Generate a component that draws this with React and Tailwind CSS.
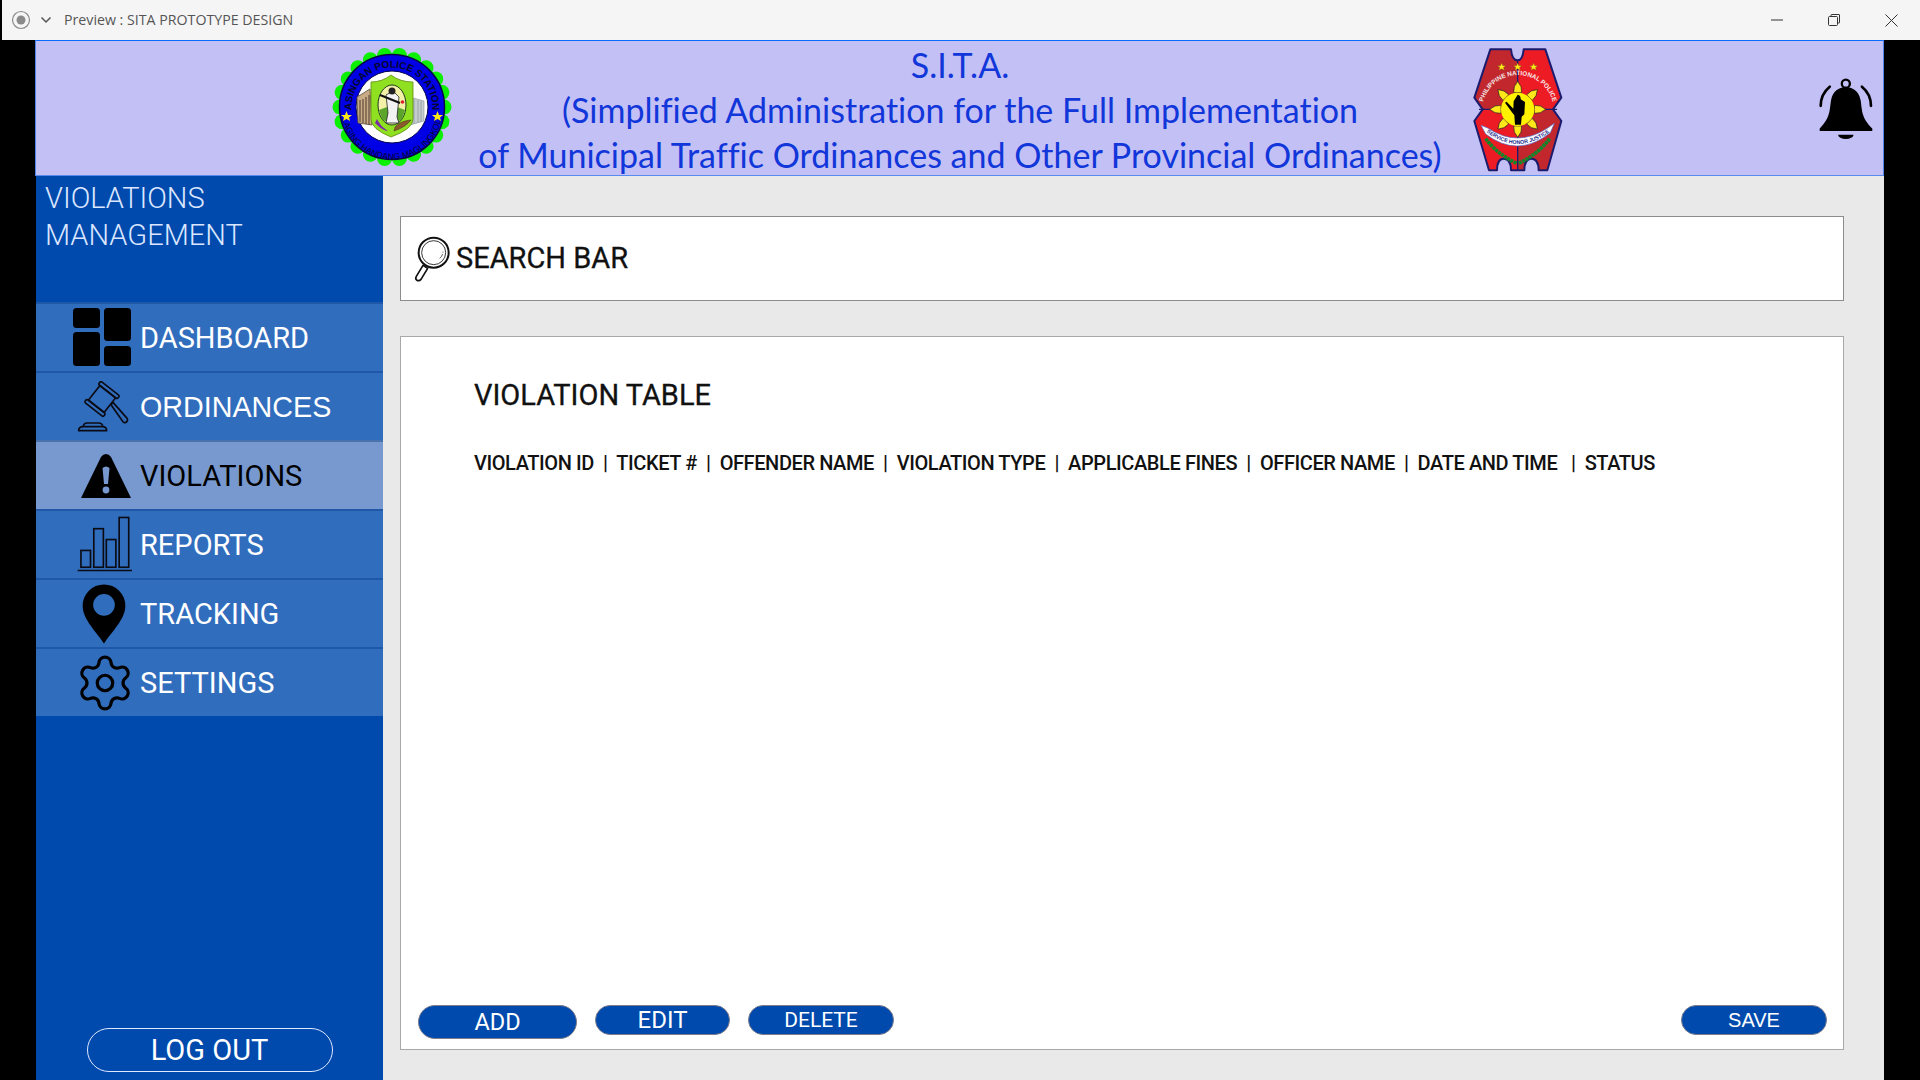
import React from "react";
import { Settings } from "lucide-react";

const roboto = "font-['Roboto',sans-serif]";

const DashboardIcon = () => (
  <svg width="58" height="59" viewBox="0 0 58 59" className="shrink-0">
    <rect x="0" y="0" width="27" height="20" rx="3.5" fill="#000" />
    <rect x="0" y="24" width="27" height="34" rx="3.5" fill="#000" />
    <rect x="31" y="0" width="27" height="33" rx="3.5" fill="#000" />
    <rect x="31" y="38" width="27" height="20" rx="3.5" fill="#000" />
  </svg>
);

const GavelIcon = () => (
  <svg width="56" height="52" viewBox="135 268 168 156" className="shrink-0">
    <g fill="none" stroke="#0b0b14" strokeWidth="5" strokeLinejoin="round">
      <g transform="rotate(38 216 322)">
        <rect x="186" y="294" width="60" height="56" />
        <rect x="180" y="282" width="72" height="12" rx="5" />
        <rect x="180" y="350" width="72" height="12" rx="5" />
      </g>
      <path d="M243 339 L249 332 L292 381 Q294 388 288 392 Q283 395 279 390 Z" />
      <path d="M146 417 Q146 405 160 405 L217 405 Q230 405 230 417 Z" />
      <path d="M160 405 Q160 394 172 394 L206 394 Q218 394 218 405" />
    </g>
  </svg>
);

const WarningIcon = ({ fill }) => (
  <svg width="50" height="44" viewBox="0 0 50 44" className="shrink-0">
    <path d="M25 0 Q28 0 30 3 L50 44 L0 44 L20 3 Q22 0 25 0 Z" fill="#000" />
    <path d="M21.5 14 Q25 11 28.5 14 L27 30 L23 30 Z" fill={fill} />
    <circle cx="25" cy="36" r="3.4" fill={fill} />
  </svg>
);

const ReportsIcon = () => (
  <svg width="56" height="57" viewBox="140 48 170 170" className="shrink-0">
    <g fill="none" stroke="#0b0b14" strokeWidth="5">
      <rect x="152" y="151" width="29" height="51" />
      <rect x="191" y="85" width="29" height="117" />
      <rect x="229" y="118" width="29" height="84" />
      <rect x="268" y="51" width="29" height="151" />
    </g>
    <path d="M142 212 H307" stroke="#0b0b14" strokeWidth="5" />
  </svg>
);

const PinIcon = () => (
  <svg width="44" height="60" viewBox="156 249 134 182" className="shrink-0">
    <path
      fillRule="evenodd"
      d="M223 430 C198 392 158 356 158 315 A65 65 0 0 1 288 315 C288 356 248 392 223 430 Z M223 279 A33 33 0 1 0 223 345 A33 33 0 1 0 223 279 Z"
      fill="#000"
    />
  </svg>
);

const SearchIcon = () => (
  <svg width="40" height="48" viewBox="70 105 120 144" className="shrink-0">
    <circle cx="132" cy="158" r="45" fill="none" stroke="#111" strokeWidth="6" />
    <circle cx="132" cy="158" r="36" fill="none" stroke="#111" strokeWidth="2.5" />
    <path d="M150 175 A26 26 0 0 0 160 155" fill="none" stroke="#111" strokeWidth="2" strokeDasharray="16 4 3 30" />
    <path d="M100 196 L114 205 L94 238 Q88 245 81 240 Q76 236 80 229 Z" fill="#fff" stroke="#111" strokeWidth="5" strokeLinejoin="round" />
  </svg>
);

const BellIcon = () => (
  <svg width="57" height="63" viewBox="1250 232 170 188">
    <path
      d="M1255 383 C1288 350 1284 328 1289 298 C1294 270 1315 259 1333 259 C1351 259 1372 270 1377 298 C1382 328 1378 350 1412 383 L1412 390 L1255 390 Z"
      fill="#000"
    />
    <circle cx="1333" cy="249" r="12" fill="none" stroke="#000" strokeWidth="7" />
    <path d="M1310 401 H1356 A23 13 0 0 1 1310 401 Z" fill="#000" />
    <path d="M1285 258 Q1258 280 1258 315" fill="none" stroke="#000" strokeWidth="8" strokeLinecap="round" />
    <path d="M1381 258 Q1408 280 1408 315" fill="none" stroke="#000" strokeWidth="8" strokeLinecap="round" />
  </svg>
);

// scallops for the green edge of the station seal
const scallops = Array.from({ length: 22 }, (_, i) => {
  const a = (i / 22) * Math.PI * 2;
  return { x: 60 + Math.cos(a) * 52, y: 60 + Math.sin(a) * 52 };
});

const StationSeal = () => (
  <svg width="120" height="120" viewBox="0 0 120 120" className="shrink-0">
    {scallops.map((s, i) => (
      <circle key={i} cx={s.x} cy={s.y} r="7.5" fill="#0af000" />
    ))}
    <circle cx="60" cy="60" r="52.5" fill="#0000e6" stroke="#06064a" strokeWidth="1.5" />
    <circle cx="60" cy="60" r="36" fill="#fff" stroke="#06064a" strokeWidth="1" />
    <defs>
      <path id="sealTop" d="M 20.5 70 A 40.5 40.5 0 1 1 99.5 70" />
      <path id="sealBottom" d="M 9.5 62 A 50.5 50.5 0 0 0 110.5 62" />
    </defs>
    <text className="font-['Liberation_Sans',sans-serif]" fontSize="10" fontWeight="700" fill="#05052a">
      <textPath href="#sealTop" startOffset="50%" textAnchor="middle">ASINGAN POLICE STATION</textPath>
    </text>
    <text className="font-['Liberation_Sans',sans-serif]" fontSize="8.6" fill="#05052a">
      <textPath href="#sealBottom" startOffset="50%" textAnchor="middle">LAGING HANDANG MAGLINGKOD</textPath>
    </text>
    <polygon points="14.5,64 16,68 20,68 17,70.5 18,74 14.5,72 11,74 12,70.5 9,68 13,68" fill="#ffe81a" />
    <polygon points="105.5,64 107,68 111,68 108,70.5 109,74 105.5,72 102,74 103,70.5 100,68 104,68" fill="#ffe81a" />
    {/* building on the left, tower on the right */}
    <path d="M25 50 L38 42 L40 78 L26 76 Z" fill="#c9ab86" stroke="#5b4a3a" strokeWidth="0.8" />
    <path d="M28 53 V75 M31 52 V76 M34 50 V77 M37 48 V78" stroke="#4a3a2c" strokeWidth="1" />
    <path d="M78 50 L92 54 L92 74 L78 78 Z" fill="#c4ccd0" stroke="#8b9296" strokeWidth="0.6" />
    <path d="M82 52 V77 M86 53 V76 M89 54 V75" stroke="#8b9296" strokeWidth="0.7" />
    {/* shield */}
    <path d="M39 35 Q50 35 59 28 Q68 35 81 35 L81 72 Q81 82 59 90 Q39 82 39 72 Z" fill="#8ee020" stroke="#5f8a10" strokeWidth="0.8" />
    <ellipse cx="60" cy="58" rx="14" ry="20" fill="#f3f0a8" stroke="#1a3a1a" strokeWidth="1" />
    <path d="M47 63 Q60 56 73 63 L70 72 Q60 80 50 72 Z" fill="#5aa52a" />
    <path d="M54 48 L61 44 L67 50 L65 70 L67 76 L54 76 L56 66 Z" fill="#f2f2f2" stroke="#222" strokeWidth="0.8" />
    <path d="M48 48 L68 56" stroke="#111" strokeWidth="2" />
    <circle cx="60" cy="44" r="3.5" fill="#222" />
    <circle cx="70.5" cy="55" r="1.8" fill="#e0202c" />
    <path d="M43 76 Q51 84 56 84 Q48 79 45 72 Z" fill="#7a2aa8" />
    <path d="M62 84 Q74 80 79 73 Q68 74 63 80 Z" fill="#8a5a2a" stroke="#3a2a1a" strokeWidth="0.5" />
  </svg>
);

const sunRays = [0, 45, 90, 135, 180, 225, 270, 315];

const PnpBadge = () => (
  <svg width="90" height="124" viewBox="218 146 270 372" className="shrink-0">
    <path d="M352 183 Q335 183 332 150 L270 150 L222 295 L247 330 L352 330 Z" fill="#c1272d" />
    <path d="M352 183 Q367 183 370 150 L435 150 L483 295 L458 330 L352 330 Z" fill="#ed1c24" />
    <path d="M247 330 L222 365 L266 513 L290 513 Q290 478 310 478 Q332 478 332 513 L352 513 L352 330 Z" fill="#ed1c24" />
    <path d="M352 330 L458 330 L483 365 L441 513 L415 513 Q415 478 393 478 Q372 478 372 513 L352 513 Z" fill="#c1272d" />
    <path
      d="M270 150 L332 150 Q335 183 352 183 Q367 183 370 150 L435 150 L483 295 L458 330 L483 365 L441 513 L415 513 Q415 478 393 478 Q372 478 372 513 L332 513 Q332 478 310 478 Q290 478 290 513 L266 513 L222 365 L247 330 L222 295 Z"
      fill="none"
      stroke="#1c1c6e"
      strokeWidth="6"
      strokeLinejoin="round"
    />
    <path d="M352 183 V513 M236 330 H470" stroke="#1c1c6e" strokeWidth="4" />
    {[304, 352, 400].map((x) => (
      <polygon key={x} transform={`translate(${x} 203)`} points="0,-12 3.5,-4 12,-4 5.5,1.5 8,10 0,5 -8,10 -5.5,1.5 -12,-4 -3.5,-4" fill="#ffe81a" stroke="#6b5a10" strokeWidth="1" />
    ))}
    <defs>
      <path id="pnpArc" d="M 248 310 A 108 108 0 0 1 458 310" />
      <path id="pnpBanner" d="M 258 398 Q 352 470 448 398" />
    </defs>
    <text className="font-['Liberation_Sans',sans-serif]" fontSize="19" fontWeight="700" fill="#f5e8e8">
      <textPath href="#pnpArc" startOffset="50%" textAnchor="middle">PHILIPPINE NATIONAL POLICE</textPath>
    </text>
    {sunRays.map((r) => (
      <path key={r} d="M340 280 L342 262 L352 246 L362 262 L364 280 Z" transform={`rotate(${r} 352 330)`} fill="#ffe81a" stroke="#222" strokeWidth="2" />
    ))}
    <circle cx="352" cy="330" r="50" fill="#fff200" />
    <path d="M352 286 Q362 288 361 300 L374 308 L372 345 L364 352 L362 376 L344 376 L342 348 L336 340 L314 310 L319 307 L339 328 L340 306 Z" fill="#000" />
    <path d="M242 378 L262 386 Q352 446 442 386 L462 372 L450 400 Q352 478 256 404 Z" fill="#fff" stroke="#5468c8" strokeWidth="2" />
    <text className="font-['Liberation_Sans',sans-serif]" fontSize="16" fontWeight="700" fill="#1c2a8c">
      <textPath href="#pnpBanner" startOffset="50%" textAnchor="middle">SERVICE HONOR JUSTICE</textPath>
    </text>
    <path d="M256 418 Q292 466 350 492" fill="none" stroke="#0a8a2a" strokeWidth="11" strokeDasharray="9 2" />
    <path d="M448 418 Q412 466 354 492" fill="none" stroke="#0a8a2a" strokeWidth="11" strokeDasharray="9 2" />
  </svg>
);

const navItems = [
  { label: "DASHBOARD", icon: <DashboardIcon />, iconBox: "pl-[37px]" },
  { label: "ORDINANCES", icon: <GavelIcon />, iconBox: "pl-[39px]", text: "text-[28.7px] font-['Liberation_Sans',sans-serif]" },
  { label: "VIOLATIONS", icon: <WarningIcon fill="#7799cf" />, iconBox: "pl-[45px]", active: true },
  { label: "REPORTS", icon: <ReportsIcon />, iconBox: "pl-[41px]" },
  { label: "TRACKING", icon: <PinIcon />, iconBox: "pl-[46px]" },
  { label: "SETTINGS", icon: <Settings size={62} strokeWidth={1.25} color="#000" />, iconBox: "pl-[38px]" },
];

const App = () => {
  return (
    <div className="w-[1920px] h-[1080px] overflow-hidden flex flex-col bg-black">
      {/* window title bar */}
      <div className="h-10 ml-[2px] bg-[#f5f5f5] flex items-center shrink-0">
        <svg width="20" height="20" viewBox="0 0 20 20" className="ml-[9px]">
          <circle cx="10" cy="10" r="8.5" fill="none" stroke="#8a8a8a" strokeWidth="1.2" />
          <circle cx="10" cy="10" r="4.5" fill="#8a8a8a" />
        </svg>
        <svg width="12" height="8" viewBox="0 0 12 8" className="ml-[9px]">
          <path d="M1.5 1.5 L6 6 L10.5 1.5" fill="none" stroke="#555" strokeWidth="1.5" />
        </svg>
        <span className="ml-[12px] text-[14.2px] text-[#555] font-['Open_Sans',sans-serif]">
          Preview : SITA PROTOTYPE DESIGN
        </span>
        <div className="ml-auto flex items-center gap-[45px] pr-[22px]">
          <svg width="12" height="2" viewBox="0 0 12 2">
            <path d="M0 1 H12" stroke="#333" strokeWidth="1" />
          </svg>
          <svg width="12" height="12" viewBox="0 0 12 12">
            <path d="M3 2.5 V1 Q3 0.5 3.5 0.5 H11 Q11.5 0.5 11.5 1 V8.5 Q11.5 9 11 9 H9.5" fill="none" stroke="#333" strokeWidth="1" />
            <rect x="0.5" y="2.5" width="9" height="9" rx="1" fill="none" stroke="#333" strokeWidth="1" />
          </svg>
          <svg width="13" height="13" viewBox="0 0 13 13">
            <path d="M0.5 0.5 L12.5 12.5 M12.5 0.5 L0.5 12.5" stroke="#333" strokeWidth="1" />
          </svg>
        </div>
      </div>

      <div className="flex-1 min-h-0 flex flex-col ml-[35px] w-[1849px]">
        {/* header */}
        <header className="h-[136px] shrink-0 bg-[#c3c0f6] border border-t-[#0a6cff] border-x-[#4f86ee] border-b-[#5a8cf0] flex items-center">
          <div className="ml-[296px] mt-[-2px] shrink-0">
            <StationSeal />
          </div>
          <div className="w-[1018px] ml-[-1px] shrink-0 pt-[2px] text-center text-[#1136d9] text-[34px] leading-[45px] [font-variant-ligatures:none] font-['Lato',sans-serif] whitespace-nowrap">
            <div>S.I.T.A.</div>
            <div>(Simplified Administration for the Full Implementation</div>
            <div>of Municipal Traffic Ordinances and Other Provincial Ordinances)</div>
          </div>
          <div className="ml-[4px] mt-[4px] shrink-0">
            <PnpBadge />
          </div>
          <div className="ml-auto mr-[8px] mt-[2px] shrink-0">
            <BellIcon />
          </div>
        </header>

        <div className="flex-1 min-h-0 flex bg-[#e9e9e9]">
          {/* sidebar */}
          <aside className={`w-[348px] shrink-0 border-l border-black bg-[#004aad] flex flex-col ${roboto}`}>
            <div className="h-[126px] pl-[9px] pt-[4px] text-[29px] leading-[37px] font-light text-[#dbe6ff]">
              VIOLATIONS
              <br />
              MANAGEMENT
            </div>
            <nav className="flex flex-col">
              {navItems.map((item) => (
                <div
                  key={item.label}
                  className={`h-[69px] flex items-center border-t-2 ${
                    item.active
                      ? "bg-[#7799cf] border-[#4a72ad] text-black"
                      : "bg-[#316dbd] border-[#1f58a8] text-white"
                  }`}
                >
                  <div className={`w-[104px] shrink-0 flex items-center ${item.iconBox}`}>{item.icon}</div>
                  <span className={`mt-[3px] ${item.text || "text-[29px]"}`}>{item.label}</span>
                </div>
              ))}
            </nav>
            <div className="mt-auto pb-2 flex justify-center">
              <button className="w-[246px] h-[44px] rounded-full border border-[#dfe8ff] text-white text-[29px] leading-none pt-[1px]">
                LOG OUT
              </button>
            </div>
          </aside>

          {/* main content */}
          <main className="flex-1 min-w-0 pt-10 pl-[17px] pr-10 pb-[30px] flex flex-col gap-[35px]">
            <div className="h-[85px] shrink-0 bg-white border border-[#8c8c8c] flex items-center pl-3 gap-[3px]">
              <SearchIcon />
              <span className={`${roboto} text-[29px] text-[#111] [-webkit-text-stroke:0.3px_#111]`}>SEARCH BAR</span>
            </div>

            <div className={`flex-1 min-h-0 bg-white border border-[#a8a8a8] flex flex-col ${roboto}`}>
              <div className="pl-[73px] pt-[38px]">
                <h2 className="text-[29px] leading-[40px] text-[#111] [-webkit-text-stroke:0.3px_#111]">VIOLATION TABLE</h2>
                <p className="mt-[34px] text-[20px] leading-[28px] font-medium text-[#111] whitespace-pre tracking-[-0.41px]">
                  {"VIOLATION ID  |  TICKET #  |  OFFENDER NAME  |  VIOLATION TYPE  |  APPLICABLE FINES  |  OFFICER NAME  |  DATE AND TIME   |  STATUS"}
                </p>
              </div>
              <div className="mt-auto pb-[10px] pl-[17px] pr-4 flex items-start text-white">
                <button className="w-[159px] h-[34px] rounded-full bg-[#004aad] border border-[#7c7c8a] text-[23.5px] pt-[2px] leading-none">
                  ADD
                </button>
                <button className="ml-[18px] w-[135px] h-[30px] rounded-full bg-[#004aad] border border-[#7c7c8a] text-[24px] leading-none">
                  EDIT
                </button>
                <button className="ml-[18px] w-[146px] h-[30px] rounded-full bg-[#004aad] border border-[#7c7c8a] text-[21px] leading-none">
                  DELETE
                </button>
                <button className="ml-auto w-[146px] h-[30px] rounded-full bg-[#004aad] border border-[#7c7c8a] text-[20px] leading-none font-['Liberation_Sans',sans-serif]">
                  SAVE
                </button>
              </div>
            </div>
          </main>
        </div>
      </div>
    </div>
  );
};

export default App;
